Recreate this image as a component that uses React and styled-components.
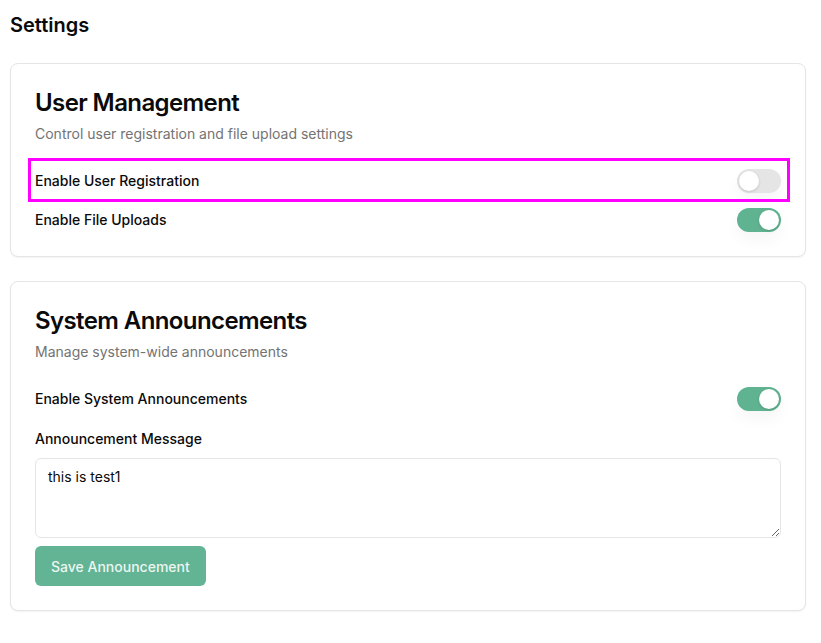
import React, { useState } from 'react';
import styled, { createGlobalStyle } from 'styled-components';

const GlobalStyle = createGlobalStyle`
  body {
    margin: 0;
    background: #ffffff;
    font-family: Inter, "Noto Sans", sans-serif;
    color: #0a0a0a;
  }
  * {
    box-sizing: border-box;
  }
`;

function Toggle({ checked, onChange }) {
  return (
    <Track type="button" $on={checked} onClick={() => onChange(!checked)}>
      <Knob $on={checked} />
    </Track>
  );
}

function App() {
  const [registration, setRegistration] = useState(false);
  const [uploads, setUploads] = useState(true);
  const [announcements, setAnnouncements] = useState(true);
  const [message, setMessage] = useState('this is test1');

  return (
    <>
      <GlobalStyle />
      <Page>
        <PageTitle>Settings</PageTitle>
        <Stack>
          <Card>
            <CardTitle>User Management</CardTitle>
            <CardDesc>Control user registration and file upload settings</CardDesc>
            <Rows>
              <Row $highlight>
                <Label>Enable User Registration</Label>
                <Toggle checked={registration} onChange={setRegistration} />
              </Row>
              <Row>
                <Label>Enable File Uploads</Label>
                <Toggle checked={uploads} onChange={setUploads} />
              </Row>
            </Rows>
          </Card>
          <Card>
            <CardTitle>System Announcements</CardTitle>
            <CardDesc>Manage system-wide announcements</CardDesc>
            <Rows>
              <Row>
                <Label>Enable System Announcements</Label>
                <Toggle checked={announcements} onChange={setAnnouncements} />
              </Row>
            </Rows>
            <Field>
              <Label>Announcement Message</Label>
              <TextArea value={message} onChange={(e) => setMessage(e.target.value)} />
              <SaveButton type="button">Save Announcement</SaveButton>
            </Field>
          </Card>
        </Stack>
      </Page>
    </>
  );
}

export default App;

const Page = styled.div`
  padding: 11px 15px 10px 10px;
`;
const PageTitle = styled.h1`
  margin: 0 0 24px;
  font-size: 20px;
  line-height: 28px;
  font-weight: 600;
  color: #0a0a0a;
`;
const Stack = styled.div`
  display: flex;
  flex-direction: column;
  gap: 24px;
`;
const Card = styled.section`
  border: 1px solid #e5e5e5;
  border-radius: 8px;
  background: #fff;
  box-shadow: 0 1px 2px rgba(0, 0, 0, 0.05);
  padding: 24px;
`;
const CardTitle = styled.h2`
  margin: 0;
  font-size: 24px;
  line-height: 30px;
  font-weight: 600;
  letter-spacing: -0.6px;
`;
const CardDesc = styled.p`
  margin: 6px 0 0;
  font-size: 14px;
  line-height: 20px;
  color: #737373;
`;
const Rows = styled.div`
  margin-top: 25px;
  display: flex;
  flex-direction: column;
  gap: 15px;
`;
const Row = styled.div`
  position: relative;
  display: flex;
  align-items: center;
  justify-content: space-between;
  ${(p) =>
    p.$highlight &&
    `
    &::after {
      content: '';
      position: absolute;
      top: -11px;
      bottom: -9px;
      left: -7px;
      right: -9px;
      border: 3px solid #ff00ff;
      pointer-events: none;
    }
  `}
`;
const Label = styled.label`
  font-size: 14px;
  line-height: 20px;
  font-weight: 500;
  color: #0a0a0a;
`;
const Track = styled.button`
  position: relative;
  width: 44px;
  height: 24px;
  padding: 0;
  border: none;
  border-radius: 12px;
  cursor: pointer;
  background: ${(p) => (p.$on ? '#5fb391' : '#e5e5e5')};
  box-shadow: 0 8px 16px rgba(0, 0, 0, 0.04);
`;
const Knob = styled.span`
  position: absolute;
  top: 2px;
  left: ${(p) => (p.$on ? '22px' : '2px')};
  width: 20px;
  height: 20px;
  border-radius: 50%;
  background: #fff;
  box-shadow: 0 1px 3px rgba(0, 0, 0, 0.15);
`;
const Field = styled.div`
  margin-top: 18px;
  display: flex;
  flex-direction: column;
  align-items: flex-start;
`;
const TextArea = styled.textarea`
  margin-top: 9px;
  width: 100%;
  height: 80px;
  padding: 8px 12px;
  border: 1px solid #e5e5e5;
  border-radius: 6px;
  font-family: Inter, "Noto Sans", sans-serif;
  font-size: 14px;
  line-height: 20px;
  color: #0a0a0a;
  resize: vertical;
  outline: none;
`;
const SaveButton = styled.button`
  margin-top: 8px;
  height: 40px;
  padding: 0 16px;
  border: none;
  border-radius: 6px;
  background: #62b494;
  color: rgba(255, 255, 255, 0.9);
  font-family: Inter, "Noto Sans", sans-serif;
  font-size: 14px;
  font-weight: 500;
  cursor: pointer;
`;
